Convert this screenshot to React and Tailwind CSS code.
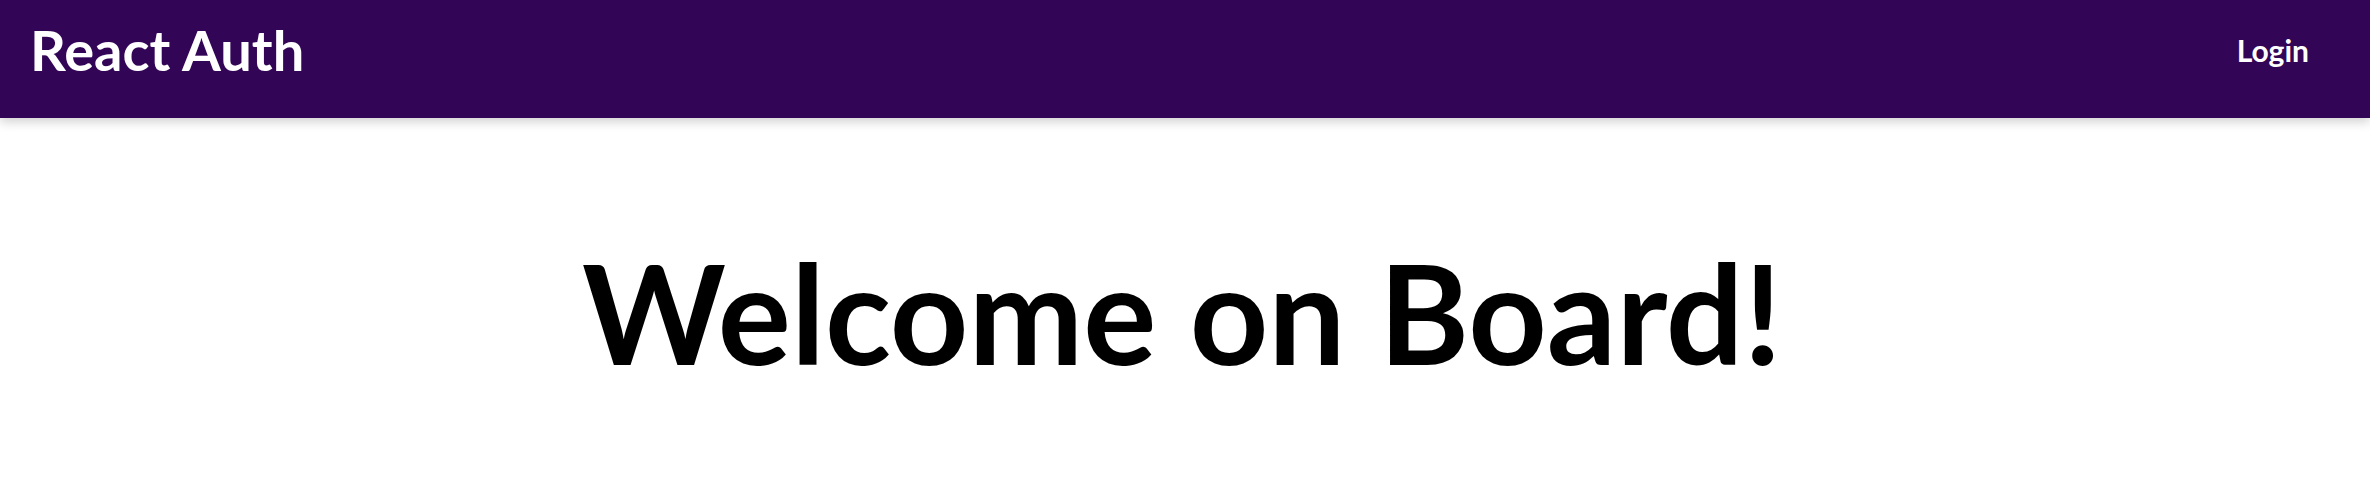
export default function App() {
  return (
    <div className="min-h-[496px] bg-white font-['Lato',sans-serif]">
      <header className="h-[118px] bg-[#330556] shadow-[0_4px_10px_rgba(0,0,0,0.18)] flex items-center justify-between pb-[18px] pl-[30px] pr-[61px]">
        <h2 className="text-[56px] font-bold text-white leading-[1.2]">React Auth</h2>
        <a className="text-[30px] font-bold text-white leading-[1.2]">Login</a>
      </header>
      <main className="flex justify-center pt-[112px]">
        <h1 className="text-[137px] font-bold text-black leading-[1.2] mr-[6px]">Welcome on Board!</h1>
      </main>
    </div>
  )
}
